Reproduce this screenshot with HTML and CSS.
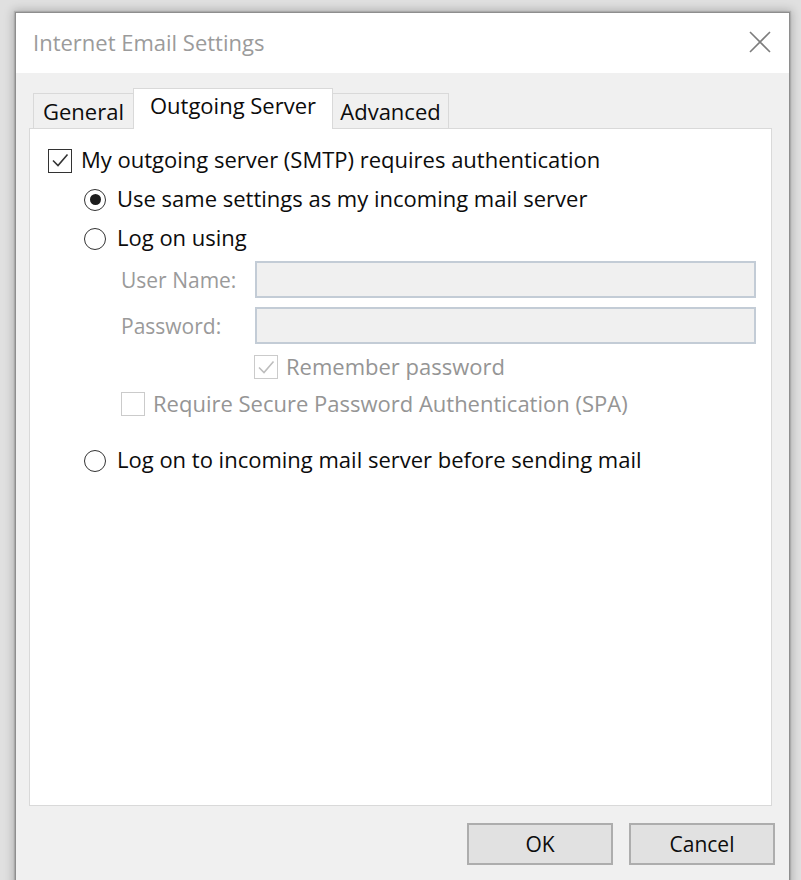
FILE: index.html
```html
<!DOCTYPE html>
<html lang="en">
<head>
<meta charset="utf-8">
<title>Internet Email Settings</title>
<link rel="stylesheet" href="styles.css">
</head>
<body>
<div class="window">
  <div class="titlebar">
    <span class="title">Internet Email Settings</span>
    <svg class="close" width="24" height="24" viewBox="0 0 24 24" aria-label="Close">
      <path d="M2 2L22 22M22 2L2 22" stroke="#7d7d7d" stroke-width="1.6" fill="none"/>
    </svg>
  </div>

  <div class="content">
    <div class="tabs">
      <div class="tab tab-general">General</div>
      <div class="tab tab-outgoing active">Outgoing Server</div>
      <div class="tab tab-advanced">Advanced</div>
    </div>

    <div class="panel">
      <div class="row row-main">
        <span class="check">
          <svg width="24" height="24" viewBox="0 0 24 24"><path d="M5 12.5L10 17.5L19.5 6.5" stroke="#333" stroke-width="1.6" fill="none"/></svg>
        </span>
        <span class="label">My outgoing server (SMTP) requires authentication</span>
      </div>

      <div class="row indent">
        <span class="radio on"></span>
        <span class="label">Use same settings as my incoming mail server</span>
      </div>

      <div class="row indent">
        <span class="radio"></span>
        <span class="label">Log on using</span>
      </div>

      <div class="field field-user">
        <span class="field-label">User Name:</span>
        <span class="input"></span>
      </div>

      <div class="field field-pass">
        <span class="field-label">Password:</span>
        <span class="input"></span>
      </div>

      <div class="row small remember">
        <span class="check disabled">
          <svg width="24" height="24" viewBox="0 0 24 24"><path d="M5 12.5L10 17.5L19.5 6.5" stroke="#bdbdbd" stroke-width="1.6" fill="none"/></svg>
        </span>
        <span class="label dim">Remember password</span>
      </div>

      <div class="row small spa">
        <span class="check disabled"></span>
        <span class="label dim">Require Secure Password Authentication (SPA)</span>
      </div>

      <div class="row indent before-send">
        <span class="radio"></span>
        <span class="label">Log on to incoming mail server before sending mail</span>
      </div>
    </div>

    <div class="buttons">
      <button class="btn">OK</button>
      <button class="btn">Cancel</button>
    </div>
  </div>
</div>
</body>
</html>
```

FILE: styles.css
```css
html, body {
  margin: 0;
  padding: 0;
  height: 100%;
  overflow: hidden;
}

body {
  background: #e0e0e0;
  font-family: "Open Sans", "Noto Sans", sans-serif;
  font-size: 22px;
  color: #0c0c0c;
}

/* dialog frame */
.window {
  margin: 12px 0 0 15px;
  width: 775px;
  height: 900px;
  box-sizing: border-box;
  border: 1px solid #8e8e8e;
  background: #f0f0f0;
  box-shadow: 0 0 1px 1px rgba(0, 0, 0, 0.12), 0 0 9px 2px rgba(0, 0, 0, 0.22);
  display: flex;
  flex-direction: column;
}

.titlebar {
  height: 60px;
  flex: none;
  background: #fff;
  display: flex;
  align-items: center;
  justify-content: space-between;
  padding: 0 17px 0 17px;
}

.title {
  color: #9b9b9b;
  font-size: 22px;
  margin-top: -2px;
}

.close {
  display: block;
  margin-top: -2px;
}

.content {
  padding: 15px 17px 0 13px;
  display: flex;
  flex-direction: column;
}

/* tab strip */
.tabs {
  display: flex;
  align-items: flex-end;
  padding-left: 4px;
  margin-bottom: -1px;
  position: relative;
  z-index: 1;
  height: 41px;
}

.tab {
  box-sizing: border-box;
  height: 35px;
  border: 1px solid #d9d9d9;
  border-bottom: none;
  background: #f0f0f0;
  display: flex;
  align-items: center;
  justify-content: center;
  padding-bottom: 1px;
  margin-bottom: 1px;
}

.tab-general { width: 101px; }
.tab-outgoing { width: 200px; margin-left: -1px; }
.tab-advanced { width: 117px; margin-left: -1px; }

.tab.active {
  height: 41px;
  background: #fff;
  margin-bottom: 0;
  padding-bottom: 8px;
  position: relative;
  z-index: 2;
}

/* page body */
.panel {
  box-sizing: border-box;
  height: 678px;
  background: #fff;
  border: 1px solid #d9d9d9;
  padding: 12px 0 0 18px;
  display: flex;
  flex-direction: column;
}

.row {
  height: 39px;
  display: flex;
  align-items: center;
}

.row.indent { margin-left: 36px; }

.label {
  white-space: nowrap;
  margin-bottom: 3px;
}
.label.dim { color: #959595; }

.row-main .label { margin-left: 9px; }
.row.indent .label { margin-left: 11px; }

.check {
  box-sizing: border-box;
  width: 24px;
  height: 24px;
  flex: none;
  border: 1.5px solid #333;
  position: relative;
}

.check svg {
  position: absolute;
  left: -1.5px;
  top: -1.5px;
}

.check.disabled { border-color: #cbcbcb; }

.radio {
  box-sizing: border-box;
  width: 22px;
  height: 22px;
  flex: none;
  border: 1.5px solid #333;
  border-radius: 50%;
  display: flex;
  align-items: center;
  justify-content: center;
}

.radio.on::after {
  content: "";
  width: 11px;
  height: 11px;
  border-radius: 50%;
  background: #1c1c1c;
}

/* credential fields */
.field {
  display: flex;
  align-items: center;
  margin-left: 73px;
  height: 37px;
}

.field-user { margin-top: 3px; }
.field-pass { margin-top: 9px; }

.field-label {
  width: 134px;
  flex: none;
  color: #9a9a9a;
  font-size: 21px;
}

.input {
  box-sizing: border-box;
  width: 501px;
  height: 37px;
  background: #f0f0f0;
  border: 2px solid #c3ccd6;
}

.row.small { height: 26px; }
.row.small .label { margin-left: 8px; }

.remember { margin: 10px 0 0 206px; }
.spa { margin: 11px 0 0 73px; }
.spa .label { margin-left: 6px; }
.before-send { margin-top: 24px; }

/* dialog buttons */
.buttons {
  display: flex;
  justify-content: flex-end;
  gap: 16px;
  margin: 17px -3px 0 0;
}

.btn {
  box-sizing: border-box;
  width: 146px;
  height: 42px;
  background: #e1e1e1;
  border: 2px solid #adadad;
  font-family: inherit;
  font-size: 21px;
  color: #0c0c0c;
  padding: 0;
}
```
